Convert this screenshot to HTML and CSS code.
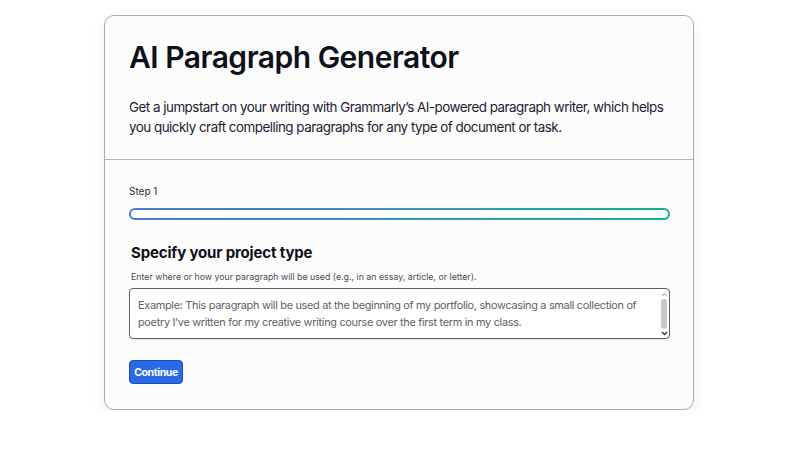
FILE: index.html
```html
<!DOCTYPE html>
<html lang="en">
<head>
<meta charset="utf-8">
<title>AI Paragraph Generator</title>
<link rel="stylesheet" href="styles.css">
</head>
<body>
<main class="card">
  <header class="card-head">
    <h1 class="title">AI Paragraph Generator</h1>
    <p class="intro">Get a jumpstart on your writing with Grammarly’s AI-powered paragraph writer, which helps you quickly craft compelling paragraphs for any type of document or task.</p>
  </header>
  <section class="card-body">
    <div class="step-label">Step 1</div>
    <div class="progress"></div>
    <h2 class="field-title">Specify your project type</h2>
    <p class="field-help">Enter where or how your paragraph will be used (e.g., in an essay, article, or letter).</p>
    <div class="textarea">
      <div class="placeholder">Example: This paragraph will be used at the beginning of my portfolio, showcasing a small collection of poetry I’ve written for my creative writing course over the first term in my class.</div>
      <div class="scrollbar">
        <svg class="arrow" width="7" height="5" viewBox="0 0 7 5"><path d="M1 4 L3.5 1.5 L6 4" fill="none" stroke="#b8b8b8" stroke-width="1.2"/></svg>
        <div class="thumb"></div>
        <svg class="arrow" width="7" height="5" viewBox="0 0 7 5"><path d="M1 1 L3.5 3.5 L6 1" fill="none" stroke="#333" stroke-width="1.4"/></svg>
      </div>
    </div>
    <button class="btn">Continue</button>
  </section>
</main>
</body>
</html>
```
FILE: styles.css
```css
html, body {
  margin: 0;
  padding: 0;
  background: #ffffff;
}
body {
  font-family: Inter, "Noto Sans", sans-serif;
  color: #0e101a;
  padding-top: 15px;
  padding-left: 104px;
}
.card {
  width: 588px;
  height: 393px;
  border: 1px solid #a9abb0;
  border-radius: 10px;
  background: #fcfcfd;
  box-shadow: 0 6px 14px rgba(60, 64, 80, 0.08);
  display: flex;
  flex-direction: column;
  overflow: hidden;
}
.card-head {
  padding: 23px 24px 0 24px;
  height: 120px;
  border-bottom: 1px solid #b4b6ba;
}
.title {
  margin: 0;
  font-size: 30px;
  font-weight: 600;
  letter-spacing: -0.5px;
  line-height: 36px;
  color: #0e101a;
}
.intro {
  margin: 22px 0 0 0;
  font-size: 13.4px;
  letter-spacing: -0.5px;
  line-height: 20px;
  color: #1d2030;
}
.card-body {
  padding: 24px 24px 0 24px;
  display: flex;
  flex-direction: column;
  align-items: flex-start;
}
.step-label {
  font-size: 10px;
  line-height: 14px;
  color: #2a2c36;
}
.progress {
  margin-top: 10px;
  width: 541px;
  height: 12px;
  box-sizing: border-box;
  border-radius: 7px;
  border: 2px solid transparent;
  background:
    linear-gradient(#ffffff, #ffffff) padding-box,
    linear-gradient(90deg, #4a7bd0 0%, #3a93b8 50%, #14b08c 100%) border-box;
}
.field-title {
  margin: 23px 0 0 2px;
  font-size: 15px;
  font-weight: 700;
  letter-spacing: -0.15px;
  line-height: 20px;
  color: #0e101a;
}
.field-help {
  margin: 8px 0 0 2px;
  font-size: 8.8px;
  line-height: 12px;
  color: #4a4d58;
}
.textarea {
  margin-top: 5px;
  width: 541px;
  height: 51px;
  box-sizing: border-box;
  border: 1px solid #5c5f6a;
  border-radius: 4px;
  background: #ffffff;
  display: flex;
  box-shadow: 0 1px 1px rgba(0,0,0,0.08);
}
.placeholder {
  flex: 1;
  min-width: 0;
  padding: 8px 12px 0 8px;
  font-size: 10.9px;
  letter-spacing: -0.3px;
  line-height: 17px;
  color: #5d606a;
}
.scrollbar {
  flex: 0 0 10px;
  padding: 3px 0 2px 0;
  display: flex;
  flex-direction: column;
  align-items: center;
  justify-content: space-between;
}
.thumb {
  width: 6px;
  flex: 1;
  margin: 2px 0;
  background: #c6c7cb;
  border-radius: 3px;
}
.arrow {
  display: block;
}
.btn {
  margin-top: 21px;
  padding: 0 4px;
  height: 24px;
  width: 54px;
  border: 1px solid #1a4fc0;
  border-radius: 4px;
  background: #2a6ae6;
  color: #ffffff;
  font-family: Inter, "Noto Sans", sans-serif;
  font-size: 10.5px;
  font-weight: 700;
  letter-spacing: -0.4px;
}
```
